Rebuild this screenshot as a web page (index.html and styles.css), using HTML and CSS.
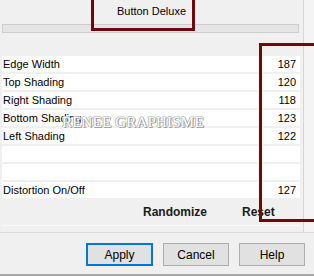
FILE: index.html
```html
<!DOCTYPE html>
<html lang="en">
<head>
  <meta charset="UTF-8">
  <meta name="viewport" content="width=device-width, initial-scale=1.0">
  <title>Button Deluxe</title>
  <link rel="stylesheet" href="styles.css">
</head>
<body>
  <div class="dialog">
    <div class="main">
      <div class="content">
        <div class="title">Button Deluxe</div>
        <div class="bar"></div>
        <div class="list">
          <div class="row"><span>Edge Width</span><span>187</span></div>
          <div class="row"><span>Top Shading</span><span>120</span></div>
          <div class="row"><span>Right Shading</span><span>118</span></div>
          <div class="row"><span>Bottom Shading</span><span>123</span></div>
          <div class="row"><span>Left Shading</span><span>122</span></div>
          <div class="row"></div>
          <div class="row"></div>
          <div class="row"><span>Distortion On/Off</span><span>127</span></div>
        </div>
        <div class="actions">
          <span class="randomize">Randomize</span>
          <span class="reset">Reset</span>
        </div>
      </div>
      <div class="edge"></div>
    </div>
    <div class="footer">
      <button class="btn default">Apply</button>
      <button class="btn">Cancel</button>
      <button class="btn">Help</button>
    </div>
  </div>

  <div class="watermark">RENEE GRAPHISME</div>
  <div class="mark mark-title"></div>
  <div class="mark mark-values"></div>
</body>
</html>
```

FILE: styles.css
```css
body {
  margin: 0;
  width: 314px;
  height: 276px;
  overflow: hidden;
  background: #f0f0f0;
  font-family: 'Liberation Sans', Arial, sans-serif;
  font-size: 11px;
  color: #000;
}

.dialog {
  display: flex;
  flex-direction: column;
  height: 276px;
}

.main {
  display: flex;
  height: 232px;
}

.content {
  width: 303px;
  display: flex;
  flex-direction: column;
}

.edge {
  flex: 1;
  border-left: 1px solid #d6d6d6;
  background: #f4f4f4;
}

.title {
  height: 24px;
  line-height: 22px;
  text-align: center;
}

.bar {
  height: 7px;
  margin: 0 4px 0 2px;
  background: #e5e5e5;
  border: 1px solid #cdcdcd;
}

.list {
  margin: 23px 3px 0 2px;
  display: grid;
  grid-auto-rows: 16px;
  row-gap: 2px;
}

.row {
  background: #fff;
  display: flex;
  justify-content: space-between;
  align-items: center;
  padding: 0 4px 0 1px;
}

.actions {
  height: 27px;
  margin: 0 3px 0 2px;
  border-bottom: 1px solid #fafafa;
  display: flex;
  align-items: center;
  font-size: 12px;
  font-weight: bold;
  color: #1a1a1a;
}

.randomize {
  margin-left: 141px;
}

.reset {
  margin-left: 35px;
}

.footer {
  flex: 1;
  border-top: 1px solid #dcdcdc;
  border-bottom: 2px solid #a6a6a6;
  display: flex;
  justify-content: flex-end;
  align-items: flex-start;
  gap: 10px;
  padding: 10px 9px 0 0;
}

.btn {
  width: 66px;
  height: 23px;
  margin: 0;
  padding: 0;
  background: #e1e1e1;
  border: 1px solid #adadad;
  font-family: 'Liberation Sans', Arial, sans-serif;
  font-size: 12px;
  color: #000;
}

.btn.default {
  width: 67px;
  border: 2px solid #0078d7;
}

.watermark {
  position: absolute;
  left: 62px;
  top: 114px;
  font-family: 'Liberation Serif', 'Times New Roman', serif;
  font-size: 15px;
  letter-spacing: 0.2px;
  color: #fff;
  text-shadow: 1px 1px 0 #9a9a9a, -1px 0 0 #b5b5b5, 0 -1px 0 #c8c8c8, 1px 0 0 #a8a8a8;
}

.mark {
  position: absolute;
  border: 3px solid #6e0a0a;
}

.mark-title {
  left: 91px;
  top: -4px;
  width: 98px;
  height: 29px;
}

.mark-values {
  left: 259px;
  top: 43px;
  width: 60px;
  height: 173px;
}
```
